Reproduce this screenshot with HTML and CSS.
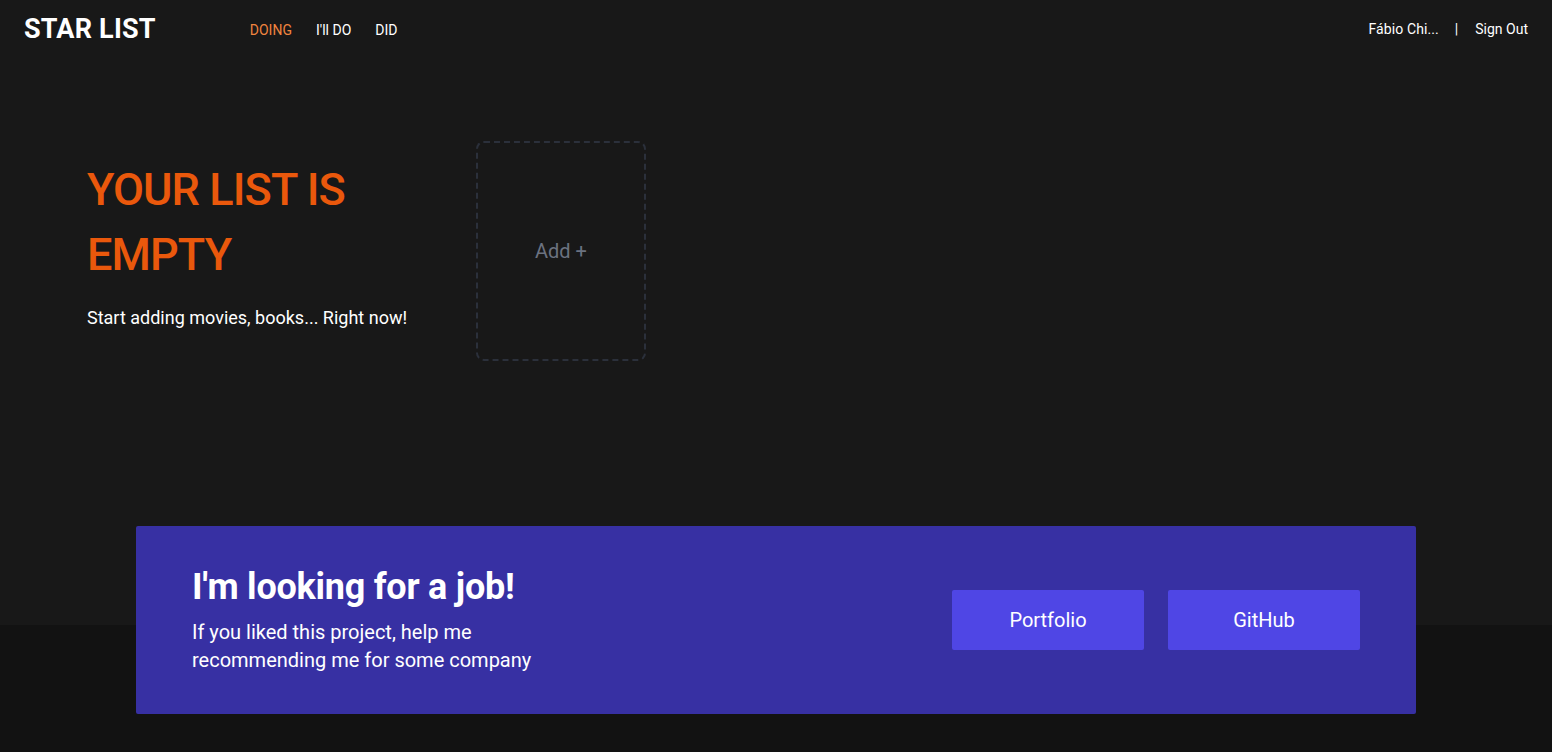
FILE: index.html
```html
<!DOCTYPE html>
<html lang="en">
<head>
<meta charset="utf-8">
<title>Star List</title>
<link rel="stylesheet" href="styles.css">
</head>
<body>
<div class="page">
  <section class="top">
    <header class="header">
      <div class="logo">STAR LIST</div>
      <nav class="nav">
        <a class="nav-link active">DOING</a>
        <a class="nav-link">I'll DO</a>
        <a class="nav-link">DID</a>
      </nav>
      <div class="user">
        <span class="user-name">Fábio Chi...</span>
        <span class="sep">|</span>
        <a class="signout">Sign Out</a>
      </div>
    </header>
    <main class="main">
      <div class="empty">
        <h1 class="empty-title">YOUR LIST IS EMPTY</h1>
        <p class="empty-sub">Start adding movies, books... Right now!</p>
      </div>
      <div class="add-card">Add +</div>
    </main>
  </section>
  <footer class="footer">
    <div class="banner">
      <div class="banner-text">
        <h2 class="banner-title">I'm looking for a job!</h2>
        <p class="banner-sub">If you liked this project, help me<br>recommending me for some company</p>
      </div>
      <div class="banner-actions">
        <a class="btn">Portfolio</a>
        <a class="btn">GitHub</a>
      </div>
    </div>
  </footer>
</div>
</body>
</html>
```

FILE: styles.css
```css
* { box-sizing: border-box; }
html, body { margin: 0; padding: 0; }
body {
  font-family: Roboto, "Liberation Sans", Arial, sans-serif;
  background: #121212;
  color: #ffffff;
  height: 752px;
  overflow: hidden;
}
.page { display: flex; flex-direction: column; }
.top {
  background: #181818;
  height: 625px;
  display: flex;
  flex-direction: column;
}
.header {
  height: 58px;
  display: flex;
  align-items: center;
  padding: 0 24px 0 24px;
}
.logo {
  font-size: 27px;
  font-weight: 700;
  line-height: 1;
  letter-spacing: 0.2px;
  padding-top: 1px;
}
.nav {
  display: flex;
  gap: 24px;
  margin-left: 94px;
  padding-top: 1px;
}
.nav-link {
  font-size: 14px;
  color: #ffffff;
  line-height: 1;
}
.nav-link.active { color: #f0843f; }
.user {
  margin-left: auto;
  display: flex;
  align-items: center;
  gap: 17px;
  font-size: 14px;
  line-height: 1;
}
.user-name { margin-right: -1px; letter-spacing: 0.1px; }
.sep { color: #ffffff; }
.main {
  display: flex;
  align-items: flex-start;
  padding: 83px 0 0 87px;
  gap: 39px;
}
.empty {
  width: 350px;
  margin-top: 16px;
}
.empty-title {
  margin: 0;
  font-size: 45px;
  line-height: 65px;
  font-weight: 500;
  color: #ea580c;
  letter-spacing: -0.9px;
}
.empty-sub {
  margin: 17px 0 0;
  font-size: 18px;
  line-height: 28px;
}
.add-card {
  width: 170px;
  height: 220px;
  border: 2px dashed #2b303b;
  border-radius: 8px;
  display: flex;
  align-items: center;
  justify-content: center;
  font-size: 20px;
  color: #6b7280;
}
.footer {
  background: #121212;
  padding: 0 136px 38px;
}
.banner {
  margin-top: -99px;
  background: #3730a3;
  border-radius: 2px;
  height: 188px;
  padding: 0 56px;
  display: flex;
  align-items: center;
  justify-content: space-between;
}
.banner-title {
  margin: 0;
  font-size: 36px;
  line-height: 40px;
  font-weight: 700;
  letter-spacing: -0.25px;
}
.banner-sub {
  margin: 11px 0 0;
  font-size: 20px;
  line-height: 28px;
}
.banner-actions {
  display: flex;
  gap: 24px;
}
.btn {
  width: 192px;
  height: 60px;
  background: #4f46e5;
  border-radius: 2px;
  display: flex;
  align-items: center;
  justify-content: center;
  font-size: 20px;
  color: #ffffff;
}
```
